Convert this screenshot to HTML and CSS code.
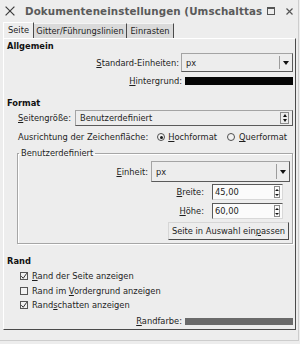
FILE: index.html
```html
<!DOCTYPE html>
<html lang="de">
<head>
<meta charset="utf-8">
<title>Dokumenteneinstellungen</title>
<link rel="stylesheet" href="styles.css">
</head>
<body>
<div class="window">
  <div class="titlebar">
    <svg class="menu-x" width="10" height="10" viewBox="0 0 10 10"><path d="M0.6 0.6 L9.4 9.4 M9.4 0.6 L0.6 9.4" stroke="#3c3c3c" stroke-width="1.2" fill="none"/></svg>
    <div class="title">Dokumenteneinstellungen (Umschalttas</div>
    <svg class="max" width="8" height="8" viewBox="0 0 8 8"><rect x="0.5" y="0.5" width="7" height="7" fill="none" stroke="#555" stroke-width="1"/><line x1="0.5" y1="1.5" x2="7.5" y2="1.5" stroke="#555" stroke-width="1"/></svg>
    <svg class="close" width="7" height="7" viewBox="0 0 7 7"><path d="M0.5 0.5 L6.5 6.5 M6.5 0.5 L0.5 6.5" stroke="#555" stroke-width="1.2" fill="none"/></svg>
  </div>
  <div class="tabs">
    <div class="tab active">Seite</div>
    <div class="tab inactive t-grid">Gitter/Führungslinien</div>
    <div class="tab inactive t-snap">Einrasten</div>
  </div>
  <div class="panel">
    <div class="heading h-general">Allgemein</div>
    <div class="row r-units">
      <span class="lbl"><u>S</u>tandard-Einheiten:</span>
      <div class="combo c-units"><span class="val">px</span><span class="sep"></span><span class="abox"><span class="tri-down"></span></span></div>
    </div>
    <div class="row r-bg">
      <span class="lbl"><u>H</u>intergrund:</span>
      <div class="swatch black"></div>
    </div>
    <div class="heading h-format">Format</div>
    <div class="row-left r-size">
      <span class="lbl"><u>S</u>eitengröße:</span>
      <div class="combo c-size"><span class="val">Benutzerdefiniert</span><span class="updown"><span class="tri-up sm"></span><span class="tri-down sm"></span></span></div>
    </div>
    <div class="row-left r-orient">
      <span class="lbl">Ausrichtung der Zeichenfläche:</span>
      <span class="radio on r1"></span><span class="rlbl"><u>H</u>ochformat</span>
      <span class="radio r2"></span><span class="rlbl"><u>Q</u>uerformat</span>
    </div>
    <fieldset class="frame">
      <legend>Benutzerdefiniert</legend>
      <div class="frow f-unit">
        <span class="lbl"><u>E</u>inheit:</span>
        <div class="combo c-unit2"><span class="val">px</span><span class="sep"></span><span class="abox"><span class="tri-down"></span></span></div>
      </div>
      <div class="frow f-w">
        <span class="lbl slbl"><u>B</u>reite:</span>
        <div class="spin"><span class="val">45,00</span><span class="btns"><span class="tri-up xs"></span><span class="tri-down xs"></span></span></div>
      </div>
      <div class="frow f-h">
        <span class="lbl slbl"><u>H</u>öhe:</span>
        <div class="spin"><span class="val">60,00</span><span class="btns"><span class="tri-up xs"></span><span class="tri-down xs"></span></span></div>
      </div>
      <div class="frow f-btn">
        <div class="button">Seite in Auswahl ein<u>p</u>assen</div>
      </div>
    </fieldset>
    <div class="heading h-border">Rand</div>
    <div class="check-row first"><span class="check on"><svg width="8" height="8" viewBox="0 0 8 8"><polyline points="1.3,4.2 3.2,6.3 6.8,1.2" fill="none" stroke="#333" stroke-width="1"/></svg></span><span><u>R</u>and der Seite anzeigen</span></div>
    <div class="check-row"><span class="check"></span><span>Rand im <u>V</u>ordergrund anzeigen</span></div>
    <div class="check-row"><span class="check on"><svg width="8" height="8" viewBox="0 0 8 8"><polyline points="1.3,4.2 3.2,6.3 6.8,1.2" fill="none" stroke="#333" stroke-width="1"/></svg></span><span>Rand<u>s</u>chatten anzeigen</span></div>
    <div class="row r-color">
      <span class="lbl"><u>R</u>andfarbe:</span>
      <div class="swatch grey"></div>
    </div>
  </div>
</div>
</body>
</html>
```
FILE: styles.css
```css
* { box-sizing: border-box; margin: 0; padding: 0; }
html, body { width: 300px; height: 344px; overflow: hidden; }
body {
  background: #ededed;
  font-family: "DejaVu Sans", "Noto Sans", sans-serif;
  font-size: 8.3px;
  color: #1e1e1e;
}
u { text-decoration: underline; text-underline-offset: 1px; }

.window {
  width: 299px;
  height: 341px;
  background: #ededed;
  border-right: 1px solid #cdcdcd;
  border-bottom: 1px solid #cdcdcd;
}

/* title bar */
.titlebar { height: 22px; display: flex; align-items: center; }
.menu-x { margin-left: 5px; flex: none; }
.title {
  margin-left: 10px;
  width: 237px;
  white-space: nowrap;
  font-weight: bold;
  font-size: 10.3px;
  letter-spacing: 0.1px;
  color: #5a5a5a;
  line-height: 12px;
}
.max { margin-left: 5px; flex: none; }
.close { margin-left: 11px; flex: none; }

/* tabs */
.tabs { height: 16px; display: flex; align-items: flex-end; margin-left: 3px; }
.tab {
  height: 16px;
  line-height: 15px;
  text-align: center;
  white-space: nowrap;
  border-top: 1px solid #fff;
  border-left: 1px solid #fff;
  border-right: 1px solid #4a4a4a;
}
.tab.active { width: 31px; background: #ededed; }
.tab.inactive { height: 15px; line-height: 14px; background: #dadada; border-left: none; border-top-color: #f4f4f4; }
.t-grid { width: 93px; }
.t-snap { width: 47px; }

/* panel */
.panel {
  margin-left: 3px;
  width: 293px;
  height: 292px;
  border: 1px solid;
  border-color: #fff #4a4a4a #4a4a4a #fff;
  padding: 1px 0 0 3px;
}
.heading { font-weight: bold; color: #111; }
.h-general { height: 13px; line-height: 13px; }
.h-format { height: 14px; line-height: 14px; margin-top: 10px; }
.h-border { height: 14px; line-height: 14px; margin-top: 10px; }

.row { display: flex; align-items: center; justify-content: flex-end; padding-right: 2px; }
.row-left { display: flex; align-items: center; padding-left: 11px; padding-right: 2px; }

.r-units { height: 19px; }
.r-units .lbl { margin-right: 2px; }
.r-bg { height: 10px; margin-top: 4px; }
.r-bg .lbl { margin-right: 3px; }
.r-size { height: 16px; }
.r-orient { height: 16px; margin-top: 3px; }
.r-color { height: 14px; margin-top: 1.5px; }
.r-color .lbl { margin-right: 3px; }

.lbl { white-space: nowrap; }

/* combo boxes */
.combo {
  display: flex;
  align-items: center;
  border: 1px solid;
  border-color: #a4a4a4 #5a5a5a #5a5a5a #a4a4a4;
  background: #ededed;
  padding-left: 4px;
}
.combo .val { flex: 1; white-space: nowrap; }
.combo .sep { width: 1px; align-self: stretch; background: #9c9c9c; margin: 2px 0; }
.combo .abox { width: 12px; display: flex; justify-content: center; align-items: center; }
.c-units { width: 112px; height: 19px; }
.c-size { flex: 1; height: 16px; margin-left: 4px; padding-right: 3px; }
.c-unit2 { width: 139px; height: 21px; }

.updown {
  width: 9px;
  height: 12px;
  border: 1px solid #8c8c8c;
  display: flex;
  flex-direction: column;
  align-items: center;
  justify-content: space-around;
}

.tri-down { width: 0; height: 0; border-left: 3.5px solid transparent; border-right: 3.5px solid transparent; border-top: 4px solid #111; }
.tri-up { width: 0; height: 0; border-left: 3.5px solid transparent; border-right: 3.5px solid transparent; border-bottom: 4px solid #111; }
.tri-down.sm, .tri-up.sm { border-left-width: 2.5px; border-right-width: 2.5px; }
.tri-down.sm { border-top-width: 3px; }
.tri-up.sm { border-bottom-width: 3px; }
.tri-down.xs, .tri-up.xs { border-left-width: 2px; border-right-width: 2px; }
.tri-down.xs { border-top-width: 2px; }
.tri-up.xs { border-bottom-width: 2px; }

/* colour swatches */
.swatch { width: 108px; }
.swatch.black { height: 8px; background: #050505; }
.swatch.grey { height: 7px; background: #6a6a6a; }

/* radios */
.radio {
  width: 8px; height: 8px;
  border: 1px solid #4e4e4e;
  border-radius: 50%;
  background: #f2f2f2;
  display: flex; align-items: center; justify-content: center;
  flex: none;
}
.radio.on::after { content: ""; width: 3px; height: 3px; border-radius: 50%; background: #1a1a1a; }
.r1 { margin-left: 9px; }
.r2 { margin-left: 10px; }
.rlbl { margin-left: 3px; white-space: nowrap; }
.r2 + .rlbl { margin-left: 4px; }

/* frame */
.frame {
  margin: 2px 2px 0 10px;
  border: 1px solid #a6a6a6;
  box-shadow: inset 1px 1px 0 #fff, 1px 1px 0 #fff;
  padding: 2px 2px 3px 0;
  min-width: 0;
}
.frame legend {
  margin-left: 1px;
  padding: 0 2px;
  height: 12px;
  line-height: 12px;
}
.frow { display: flex; align-items: center; justify-content: flex-end; }
.f-unit { height: 21px; }
.f-unit .lbl { margin-right: 3px; }
.f-w { height: 16px; margin-top: 2px; }
.f-h { height: 16px; margin-top: 3px; }
.f-btn { height: 18px; margin-top: 3px; }
.slbl { margin-right: 8px; }

.spin {
  width: 71px;
  height: 16px;
  margin-right: 7px;
  display: flex;
  align-items: center;
  background: #fbfbfb;
  border: 1px solid;
  border-color: #5a5a5a #d8d8d8 #d8d8d8 #5a5a5a;
}
.spin .val { flex: 1; padding-left: 2px; }
.spin .btns {
  width: 6px;
  height: 12px;
  margin-right: 2px;
  border: 1px solid #8a8a8a;
  display: flex;
  flex-direction: column;
  align-items: center;
  justify-content: space-around;
}

.button {
  width: 121px;
  height: 18px;
  margin-right: 1px;
  line-height: 16px;
  text-align: center;
  white-space: nowrap;
  border: 1px solid;
  border-color: #d6d6d6 #4a4a4a #4a4a4a #d6d6d6;
  background: #ededed;
}

/* checkboxes */
.check-row { height: 14.5px; display: flex; align-items: center; padding-left: 13px; white-space: nowrap; }
.check-row.first { margin-top: 1px; }
.check {
  width: 8px; height: 8px;
  border: 1px solid #555;
  background: #f2f2f2;
  margin-right: 4px;
  flex: none;
  position: relative;
}
.check svg { position: absolute; left: -1px; top: -1px; }
```
